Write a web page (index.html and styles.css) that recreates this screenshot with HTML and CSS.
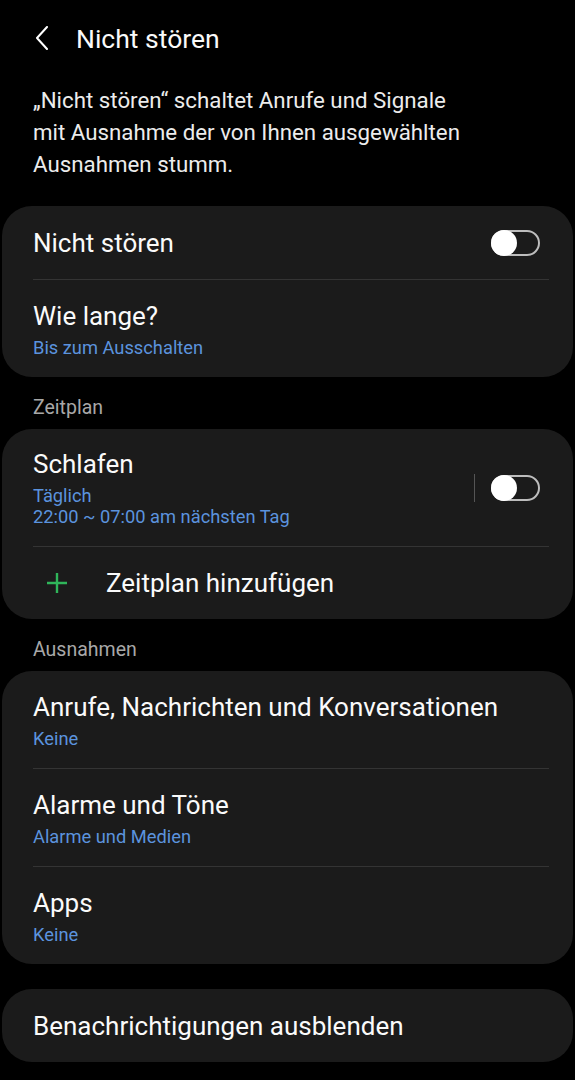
FILE: index.html
```html
<!DOCTYPE html>
<html>
<head>
  <title>Nicht stören</title>
  <link rel="stylesheet" href="styles.css">
</head>
<body>
  <div class="screen">
    <header class="topbar">
      <svg class="back" width="14" height="24" viewBox="0 0 14 24">
        <path d="M12 1 L2 12 L12 23" fill="none" stroke="#fff" stroke-width="2" stroke-linecap="round" stroke-linejoin="round"/>
      </svg>
      <h1>Nicht stören</h1>
    </header>

    <p class="intro">„Nicht stören“ schaltet Anrufe und Signale mit Ausnahme der von Ihnen ausgewählten Ausnahmen stumm.</p>

    <div class="card">
      <div class="row row-single">
        <div class="row-text"><div class="title">Nicht stören</div></div>
        <div class="switch"><span class="knob"></span></div>
      </div>
      <div class="row">
        <div class="row-text">
          <div class="title">Wie lange?</div>
          <div class="sub">Bis zum Ausschalten</div>
        </div>
      </div>
    </div>

    <div class="section">Zeitplan</div>
    <div class="card">
      <div class="row row-sched">
        <div class="row-text">
          <div class="title">Schlafen</div>
          <div class="sub">Täglich</div>
          <div class="sub">22:00 ~ 07:00 am nächsten Tag</div>
        </div>
        <span class="vsep"></span>
        <div class="switch"><span class="knob"></span></div>
      </div>
      <div class="row row-add">
        <svg class="plus" width="22" height="22" viewBox="0 0 22 22">
          <path d="M11 1 V21 M1 11 H21" stroke="#2fb55a" stroke-width="2.4"/>
        </svg>
        <div class="title">Zeitplan hinzufügen</div>
      </div>
    </div>

    <div class="section">Ausnahmen</div>
    <div class="card">
      <div class="row">
        <div class="row-text">
          <div class="title">Anrufe, Nachrichten und Konversationen</div>
          <div class="sub">Keine</div>
        </div>
      </div>
      <div class="row">
        <div class="row-text">
          <div class="title">Alarme und Töne</div>
          <div class="sub">Alarme und Medien</div>
        </div>
      </div>
      <div class="row">
        <div class="row-text">
          <div class="title">Apps</div>
          <div class="sub">Keine</div>
        </div>
      </div>
    </div>

    <div class="card card-last">
      <div class="row row-single">
        <div class="row-text"><div class="title">Benachrichtigungen ausblenden</div></div>
      </div>
    </div>
  </div>
</body>
</html>
```

FILE: styles.css
```css
body {
  margin: 0;
  background: #000;
  color: #fafafa;
  font-family: Roboto, "Noto Sans", Arial, sans-serif;
}
.screen {
  width: 575px;
  min-height: 1080px;
  padding: 0 2px;
  box-sizing: border-box;
}
.topbar {
  display: flex;
  align-items: center;
  height: 76px;
  padding-left: 33px;
}
.back {
  margin-right: 27px;
}
.topbar h1 {
  margin: 0;
  font-size: 26.5px;
  font-weight: 400;
}
.intro {
  margin: 8px 0 0 0;
  padding: 0 31px;
  max-width: 440px;
  font-size: 22.3px;
  line-height: 32px;
  color: #ececec;
}
.card {
  background: #1b1b1b;
  border-radius: 30px;
  margin-top: 26px;
  overflow: hidden;
}
.row {
  display: flex;
  align-items: center;
  margin: 0 24px 0 31px;
  min-height: 97px;
  border-top: 1px solid #343434;
}
.row:first-child {
  border-top: none;
}
.row-single {
  min-height: 73px;
}
.row-text {
  flex: 1;
}
.title {
  font-size: 26px;
  line-height: 32px;
}
.sub {
  font-size: 18.3px;
  line-height: 21px;
  color: #5b93de;
}
.title + .sub {
  margin-top: 5px;
}
.row-sched {
  min-height: 117px;
}
.vsep {
  width: 1px;
  height: 28px;
  background: #555;
  margin-right: 16px;
}
.switch {
  position: relative;
  width: 49px;
  height: 26px;
  border: 2px solid #bdbdbd;
  border-radius: 15px;
  box-sizing: border-box;
  margin-right: 9px;
}
.knob {
  position: absolute;
  left: -2px;
  top: -2px;
  width: 26px;
  height: 26px;
  border-radius: 50%;
  background: #fff;
}
.row-add {
  min-height: 72px;
}
.plus {
  margin-left: 13px;
  margin-right: 38px;
}
.section {
  margin: 19px 0 0 31px;
  font-size: 19.5px;
  color: #a8a8a8;
  line-height: 24px;
}
.section + .card {
  margin-top: 9px;
}
.card-last {
  margin-top: 25px;
}
```
